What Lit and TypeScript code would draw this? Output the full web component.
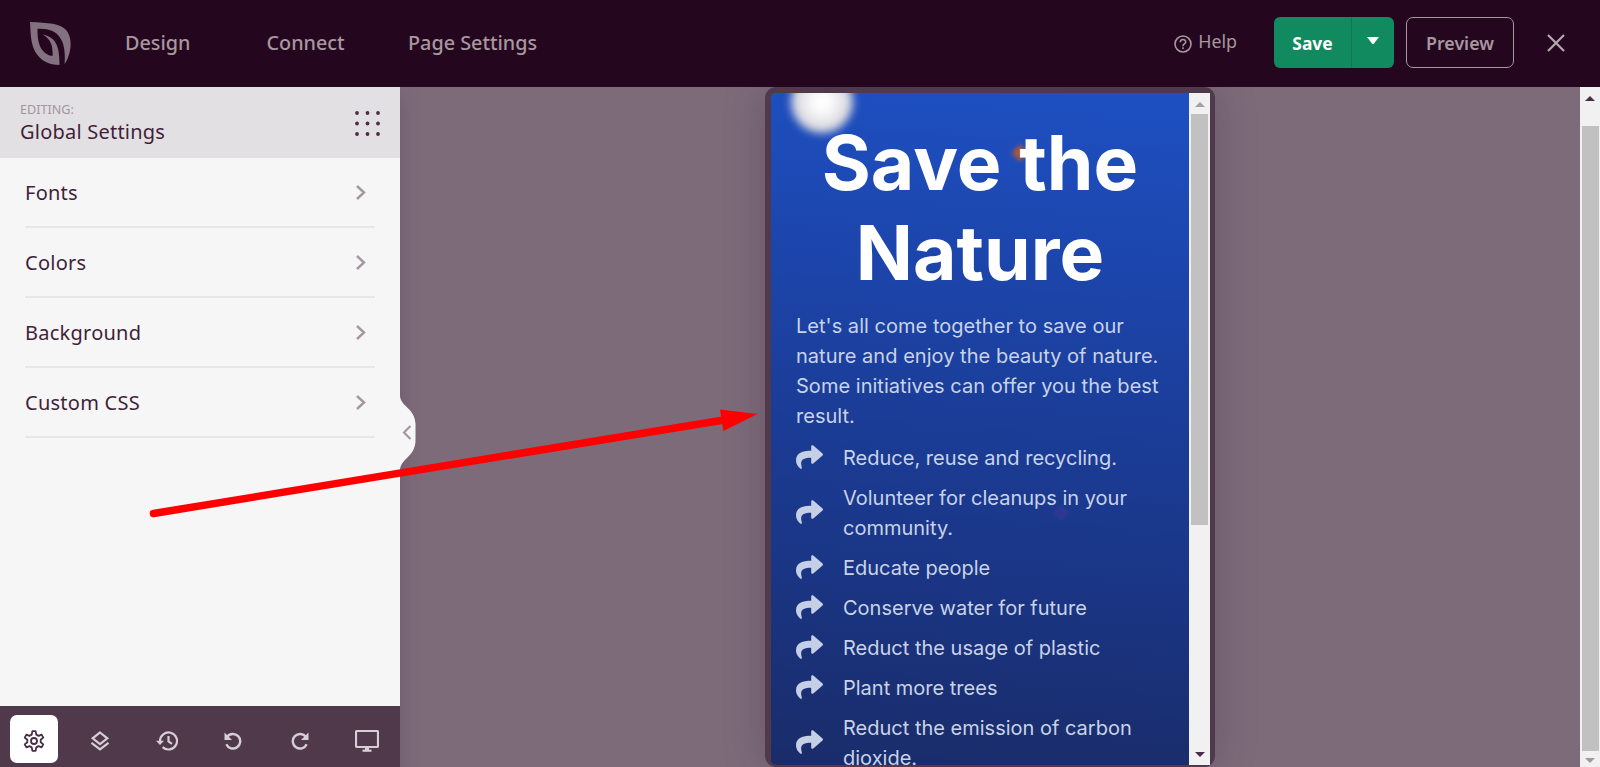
import { LitElement, html, css, svg } from 'lit'
import { customElement, property } from 'lit/decorators.js'

const chevron = svg`<path d="M2 1 L9 7.5 L2 14" fill="none" stroke="currentColor" stroke-width="2.4" />`

@customElement('top-bar')
export class TopBar extends LitElement {
  @property({ type: Array }) links = ['Design', 'Connect', 'Page Settings'];

  static styles = css`
    :host {
      display: block;
    }

    header {
      display: flex;
      align-items: center;
      height: 87px;
      padding: 0 35px 2px 30px;
      box-sizing: border-box;
      background: #24071f;
      color: #a7979f;
      font-size: 20px;
    }

    .logo {
      width: 41px;
      height: 43px;
      margin: 1px 54px 0 0;
    }

    nav {
      display: grid;
      grid-template-columns: 141.5px 141.5px auto;
      font-size: 19.8px;
      font-weight: 550;
    }

    .right {
      display: flex;
      align-items: center;
      margin-left: auto;
    }

    .help {
      display: flex;
      align-items: center;
      gap: 6px;
      margin: -3px 37px 0 0;
      font-size: 17.8px;
    }

    .help svg {
      margin-top: 5px;
    }

    .save {
      display: flex;
      width: 120px;
      height: 51px;
      border-radius: 6px;
      background: #108a5e;
      color: #fff;
      font-size: 17.4px;
      font-weight: 700;
    }

    .save span {
      display: flex;
      align-items: center;
      justify-content: center;
    }

    .label {
      width: 77px;
      border-right: 1px solid #0b7a50;
    }

    .caret {
      flex: 1;
      padding-bottom: 3px;
    }

    .preview {
      display: flex;
      align-items: center;
      justify-content: center;
      width: 108px;
      height: 51px;
      margin: 0 33px 0 12px;
      box-sizing: border-box;
      border: 1px solid #a7979f;
      border-radius: 7px;
      font-size: 17.8px;
      font-weight: 600;
    }
  `;

  render() {
    return html`
      <header>
        <svg class="logo" viewBox="30 35 121 127" fill="#84717f">
          <path d="M30 35 C85 37 118 40 136 58 C158 82 152 130 132 160 C135 120 130 92 113 74 C99 58 78 55 52 55 C52 90 57 110 72 124 C80 131 88 135 97 135 C97 105 93 88 68 72 C104 80 118 102 117 162 C88 162 60 150 45 122 C32 98 32 70 30 35 Z" />
        </svg>
        <nav>${this.links.map((link) => html`<span>${link}</span>`)}</nav>
        <div class="right">
          <span class="help">
            <svg width="18" height="18" viewBox="0 0 18 18" fill="none" stroke="currentColor" stroke-width="1.6">
              <circle cx="9" cy="9" r="8" />
              <path d="M6.300 7.300 C6.300 3.500 11.700 3.700 11.700 7 C11.700 9 9 9 9 11.200 M9 12.300 V14" />
            </svg>
            Help
          </span>
          <div class="save">
            <span class="label">Save</span>
            <span class="caret">
              <svg width="12" height="8" viewBox="0 0 12 8" fill="#fff"><path d="M0 0 H12 L7 6.500 Q6 7.500 5 6.500 Z" /></svg>
            </span>
          </div>
          <div class="preview">Preview</div>
          <svg width="18" height="18" viewBox="0 0 18 18" stroke="#b5a8af" stroke-width="2.200">
            <path d="M1 1 L17 17 M17 1 L1 17" />
          </svg>
        </div>
      </header>
    `;
  }
}

@customElement('side-panel')
export class SidePanel extends LitElement {
  @property({ type: Array }) items = ['Fonts', 'Colors', 'Background', 'Custom CSS'];

  static styles = css`
    :host {
      position: relative;
      z-index: 1;
      display: flex;
      flex-direction: column;
      width: 400px;
      background: #f6f6f6;
      color: #3f1f3a;
      box-shadow: 0 10px 20px rgba(60, 35, 55, 0.25);
    }

    .head {
      display: flex;
      align-items: center;
      justify-content: space-between;
      height: 71px;
      padding: 0 20px;
      box-sizing: border-box;
      background: #e3e0e3;
    }

    .head svg {
      margin: 2px -1px 0 0;
    }

    .editing {
      padding-top: 1px;
      font-size: 12.6px;
      line-height: 18px;
      color: #a3959f;
    }

    .title {
      font-size: 20px;
      line-height: 26px;
      letter-spacing: 0.22px;
    }

    .list {
      flex: 1;
      padding: 0 25px;
    }

    .item {
      display: flex;
      align-items: center;
      justify-content: space-between;
      height: 70px;
      padding-right: 9px;
      box-sizing: border-box;
      border-bottom: 2px solid #e8e7e8;
      font-size: 20px;
      letter-spacing: 0.25px;
    }

    .item svg {
      color: #a497a1;
    }

    .tools {
      display: grid;
      grid-template-columns: repeat(6, 1fr);
      align-items: center;
      justify-items: center;
      height: 61px;
      padding-top: 5px;
      box-sizing: border-box;
      background: #4f394b;
      color: #d6cfd5;
    }

    .tool {
      display: flex;
      align-items: center;
      justify-content: center;
      width: 48px;
      height: 48px;
      padding-top: 4px;
      box-sizing: border-box;
      border-radius: 7px;
    }

    .active {
      margin-left: 1px;
      background: #fff;
      color: #4a2d46;
    }

    .collapse {
      position: absolute;
      left: 399px;
      top: 309px;
    }
  `;

  render() {
    return html`
      <div class="head">
        <div>
          <div class="editing">EDITING:</div>
          <div class="title">Global Settings</div>
        </div>
        <svg width="26" height="26" viewBox="0 0 26 26" fill="#4a2d46">
          ${[2, 12.5, 23].map((y) => [2, 12.5, 23].map((x) => svg`<circle cx=${x} cy=${y} r="1.900" />`))}
        </svg>
      </div>
      <div class="list">
        ${this.items.map((item) => html`
          <div class="item">${item}<svg width="11" height="15" viewBox="0 0 11 15">${chevron}</svg></div>
        `)}
      </div>
      <div class="tools">
        <span class="tool active">
          <svg width="22" height="22" viewBox="0 0 22 22" fill="none" stroke="currentColor" stroke-width="1.800" stroke-linejoin="round">
            <path d="M9.400 1.200 H12.600 L13.300 4.600 L15.600 5.900 L18.600 4.600 L20.300 7.600 L17.700 9.700 V12.300 L20.300 14.400 L18.600 17.400 L15.600 16.100 L13.300 17.400 L12.600 20.800 H9.400 L8.700 17.400 L6.400 16.100 L3.400 17.400 L1.700 14.400 L4.300 12.300 V9.700 L1.700 7.600 L3.400 4.600 L6.400 5.900 L8.700 4.600 Z" />
            <circle cx="11" cy="11" r="3" />
          </svg>
        </span>
        <span class="tool">
          <svg width="20" height="20" viewBox="0 0 20 20" fill="none" stroke="currentColor" stroke-width="2.200">
            <path d="M10 1.500 L17.300 7.300 L10 13 L2.700 7.300 Z M1.500 11.800 L10 18.400 L18.500 11.800" />
          </svg>
        </span>
        <span class="tool">
          <svg width="22" height="20" viewBox="0 0 22 20" fill="none" stroke="currentColor" stroke-width="2.200">
            <path d="M4 10 A8.500 8.500 0 1 1 6.600 16.100 M12.500 5 V10.500 L16 12.800" />
            <path d="M0 9.700 H8 L4 14 Z" fill="currentColor" stroke="none" />
          </svg>
        </span>
        <span class="tool">
          <svg width="18" height="18" viewBox="0 0 18 18" fill="none" stroke="currentColor" stroke-width="2.400">
            <path d="M3 5 A7.300 7.300 0 1 1 2.300 12.300" />
            <path d="M0.500 0.500 V8 H8 Z" fill="currentColor" stroke="none" />
          </svg>
        </span>
        <span class="tool">
          <svg width="18" height="18" viewBox="0 0 18 18" fill="none" stroke="currentColor" stroke-width="2.400">
            <path d="M15 5 A7.300 7.300 0 1 0 15.700 12.300" />
            <path d="M17.500 0.500 V8 H10 Z" fill="currentColor" stroke="none" />
          </svg>
        </span>
        <span class="tool">
          <svg width="24" height="22" viewBox="0 0 24 22" fill="none" stroke="currentColor" stroke-width="2.200">
            <rect x="1" y="1" width="22" height="16" rx="1" />
            <path d="M12 17 V20" stroke-width="4" />
            <path d="M7.500 20.700 H16.500" />
          </svg>
        </span>
      </div>
      <svg class="collapse" width="18" height="74" viewBox="0 0 18 74">
        <path d="M0 0 H1 C2 11 16 12 16.500 28 V45 C16 61 2 62 1 74 H0 Z" fill="#f6f6f6" />
        <path d="M11.500 30 L5 36.500 L11.500 43" fill="none" stroke="#a497a1" stroke-width="2.200" />
      </svg>
    `;
  }
}

@customElement('phone-preview')
export class PhonePreview extends LitElement {
  @property({ type: Array }) items = [
    'Reduce, reuse and recycling.',
    'Volunteer for cleanups in your community.',
    'Educate people',
    'Conserve water for future',
    'Reduct the usage of plastic',
    'Plant more trees',
    'Reduct the emission of carbon dioxide.',
  ];

  static styles = css`
    :host {
      display: flex;
      width: 450px;
      height: 680px;
      box-sizing: border-box;
      border: solid #4f394b;
      border-width: 6px 5px 2px 6px;
      border-radius: 11px;
      box-shadow: 0 0 40px rgba(50, 25, 45, 0.25);
      font-family: Inter, sans-serif;
    }

    .page {
      position: relative;
      width: 418px;
      padding: 25px 25px 0;
      box-sizing: border-box;
      background: linear-gradient(184deg, #1e50c2 0%, #1c45ab 27%, #1b3d98 48%, #1a3584 72%, #1a2c69 100%);
      color: #c9d3e8;
      overflow: hidden;
      border-radius: 5px 0 0 5px;
    }

    .moon {
      position: absolute;
      left: 20px;
      top: -22px;
      width: 62px;
      height: 62px;
      border-radius: 50%;
      background: radial-gradient(circle, #fff 0 15%, #cfcdd6 75%);
      filter: blur(4px);
    }

    .spark {
      position: absolute;
      width: 12px;
      height: 12px;
      transform: rotate(45deg);
      filter: blur(2px);
    }

    .orange {
      left: 243px;
      top: 54px;
      background: #b0563c;
    }

    .violet {
      left: 284px;
      top: 414px;
      background: #2d3793;
      filter: blur(1px);
    }

    h1 {
      position: relative;
      margin: 0 0 13px;
      color: #fff;
      font-size: 75px;
      line-height: 90px;
      font-weight: 700;
      text-align: center;
    }

    p {
      position: relative;
      margin: 0 -5px 12px 0;
      font-size: 20px;
      line-height: 30px;
      letter-spacing: 0.03px;
    }

    .row {
      position: relative;
      display: flex;
      align-items: center;
      gap: 20px;
      margin-bottom: 10px;
      font-size: 20px;
      line-height: 30px;
    }

    .row svg {
      flex: none;
      margin-top: -2px;
    }

    .scroll {
      flex: 1;
      display: flex;
      flex-direction: column;
      align-items: center;
      box-sizing: border-box;
      background: #f1f1f1;
    }

    .up {
      margin: 9px 0 7px;
    }

    .thumb {
      width: 17px;
      height: 411px;
      background: #c1c1c1;
    }

    .down {
      margin: auto 0 8px;
    }
  `;

  render() {
    return html`
      <div class="page">
        <div class="moon"></div>
        <div class="spark orange"></div>
        <div class="spark violet"></div>
        <h1>Save the Nature</h1>
        <p>Let's all come together to save our nature and enjoy the beauty of nature. Some initiatives can offer you the best result.</p>
        ${this.items.map((item) => html`
          <div class="row">
            <svg width="27" height="24" viewBox="0 32 512 448" fill="#c5cfe5">
              <path d="M503.700 189.800 L327.700 37.900 C312.300 24.500 288 35.300 288 56 V136 C127.400 138 0 170 0 322.300 C0 383.800 39.600 444.600 83.300 476.500 C97 486.400 116.400 473.900 111.400 457.800 C66 312.800 133 274.300 288 272 V360 C288 380.700 312.300 391.500 327.700 378.200 L503.700 226.200 C514.800 216.600 514.800 199.400 503.700 189.800 Z" />
            </svg>
            <span>${item}</span>
          </div>
        `)}
      </div>
      <div class="scroll">
        <svg class="up" width="10" height="5" viewBox="0 0 10 5" fill="#a89da5"><path d="M0 5 L5 0 L10 5 Z" /></svg>
        <div class="thumb"></div>
        <svg class="down" width="10" height="5" viewBox="0 0 10 5" fill="#4a2d46"><path d="M0 0 H10 L5 5 Z" /></svg>
      </div>
    `;
  }
}

@customElement('app-root')
export class AppRoot extends LitElement {
  static styles = css`
    :host {
      position: relative;
      display: flex;
      flex-direction: column;
      height: 767px;
      overflow: hidden;
      font-family: "Noto Sans", sans-serif;
    }

    .body {
      flex: 1;
      display: flex;
      min-height: 0;
      overflow: hidden;
      background: #7d6b7a;
    }

    .canvas {
      flex: 1;
      display: flex;
      justify-content: center;
      overflow: hidden;
    }

    .scroll {
      width: 20px;
      display: flex;
      flex-direction: column;
      align-items: center;
      background: #f1f1f1;
    }

    .up {
      margin: 9px 0 25px;
    }

    .thumb {
      width: 17px;
      height: 625px;
      background: #c1c1c1;
    }

    .down {
      margin-top: 7px;
    }

    .pointer {
      position: absolute;
      left: 140px;
      top: 395px;
      z-index: 2;
    }
  `;

  render() {
    return html`
      <top-bar></top-bar>
      <div class="body">
        <side-panel></side-panel>
        <div class="canvas"><phone-preview></phone-preview></div>
        <div class="scroll">
          <svg class="up" width="10" height="5" viewBox="0 0 10 5" fill="#4a2d46"><path d="M0 5 L5 0 L10 5 Z" /></svg>
          <div class="thumb"></div>
          <svg class="down" width="10" height="5" viewBox="0 0 10 5" fill="#a497a1"><path d="M0 0 H10 L5 5 Z" /></svg>
        </div>
      </div>
      <svg class="pointer" width="630" height="130" viewBox="0 0 630 130">
        <path d="M13.500 118.500 L590 24" stroke="#f00" stroke-width="7.500" stroke-linecap="round" />
        <path d="M617.500 19 L580 14.500 L583.500 36 Z" fill="#f00" />
      </svg>
    `;
  }
}

declare global {
  interface HTMLElementTagNameMap {
    'app-root': AppRoot
    'top-bar': TopBar
    'side-panel': SidePanel
    'phone-preview': PhonePreview
  }
}
